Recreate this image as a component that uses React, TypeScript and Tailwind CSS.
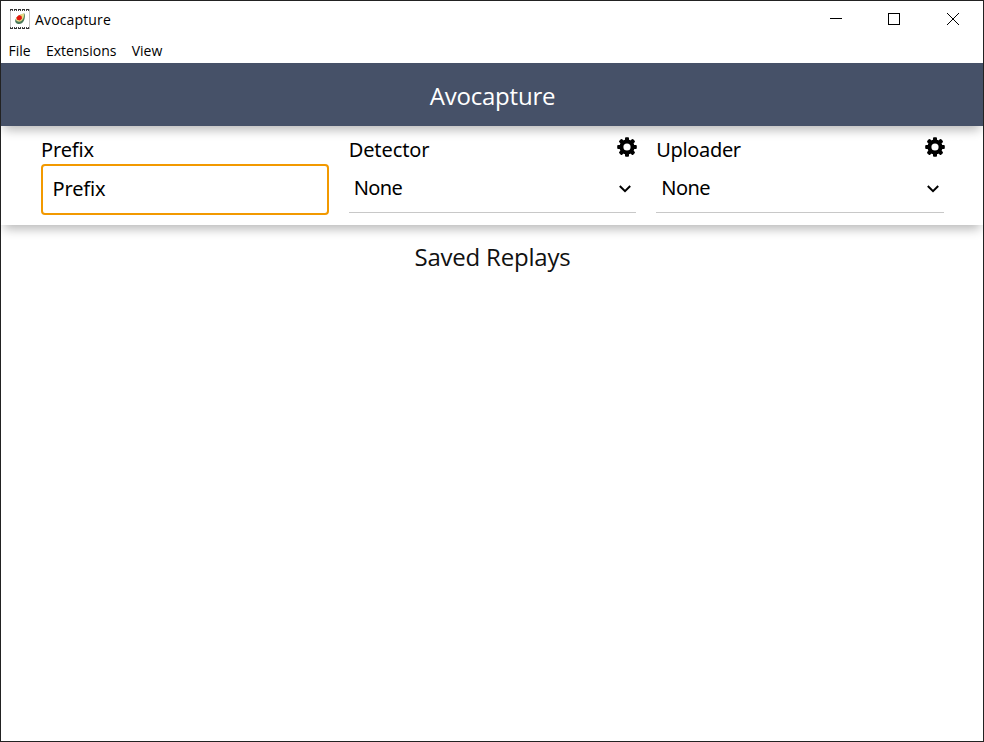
import React from "react";

function AppIcon() {
  return (
    <svg width="20" height="20" viewBox="0 0 20 20" shapeRendering="crispEdges">
      <path d="M0 0h20v20H0z" fill="#fff" />
      <path d="M.5 0v20M19.5 0v20" stroke="#c4c4c4" />
      <path d="M0 .5h20M0 19.5h20" stroke="#333" strokeDasharray="3 1" />
      <path d="M0 1.500h20M0 18.500h20" stroke="#444" strokeDasharray="1 1" />
      <g shapeRendering="auto">
        <path d="M14.500 4.500c1.200 4-.5 10.500-5.500 10.500-3 0-4.500-2.200-3.500-4.500C7 7 11 5 14.500 4.500z" fill="#4b7959" />
        <path d="M14 4.500c.6 3.600-1.500 8.200-5 8.200-2.500 0-3.700-1.700-2.900-3.400C7.400 6.500 11 4.800 14 4.500z" fill="#e5dc86" />
        <path d="M9 6l2.500 1 .5 2.500-2 2-3-.8-.6-2.300z" fill="#e3160f" />
      </g>
    </svg>
  );
}

const TEETH = [0, 45, 90, 135, 180, 225, 270, 315];

function Gear() {
  return (
    <svg width="20" height="20" viewBox="0 0 20 20" className="mt-[11px] -mr-px">
      {TEETH.map((a) => (
        <path key={a} d="M8 5V1.200Q8 .2 9 .2h2q1 0 1 1V5z" transform={`rotate(${a} 10 10)`} />
      ))}
      <circle cx="10" cy="10" r="5.600" fill="none" stroke="#000" strokeWidth="4" />
    </svg>
  );
}

function SelectField({ label, spacing }: { label: string; spacing: string }) {
  return (
    <div className="flex min-w-0 flex-col">
      <div className="flex h-[38px] justify-between">
        <span className={`pt-[10px] text-[20px] leading-[27px] ${spacing}`}>{label}</span>
        <Gear />
      </div>
      <div className="flex h-[49px] items-center justify-between border-b border-[#c8c8c8] pr-[5px] pl-[5px]">
        <span className="pb-0.5 text-[20px] leading-[27px] tracking-[-0.6px]">None</span>
        <svg width="12" height="8" viewBox="0 0 12 8" fill="none" stroke="#000" strokeWidth="2" className="mt-px">
          <path d="M.8 1l5.200 5.200L11.200 1" />
        </svg>
      </div>
    </div>
  );
}

export default function App() {
  return (
    <div className="flex h-[742px] w-[984px] flex-col overflow-hidden border border-[#222] bg-white font-['Noto_Sans',sans-serif] text-black">
      <div className="flex h-9 shrink-0 items-center justify-between pl-[9px]">
        <div className="flex items-center gap-[5px] font-['Open_Sans',sans-serif] text-[14px] tracking-[0.15px]">
          <AppIcon />
          <span>Avocapture</span>
        </div>
        <svg width="154" height="36" viewBox="0 0 154 36" fill="none" stroke="#000">
          <path d="M1 17.500h12M59.500 12.500h11v11h-11z" shapeRendering="crispEdges" />
          <path d="M118 12l12 12M130 12l-12 12" />
        </svg>
      </div>
      <nav className="flex h-[26px] shrink-0 items-center gap-[15.300px] pl-[7.500px] font-['Open_Sans',sans-serif] text-[14px]">
        <span>File</span>
        <span>Extensions</span>
        <span>View</span>
      </nav>
      <header className="z-20 flex h-[63px] shrink-0 items-center justify-center bg-[#465168] pt-0.5 pl-px font-['Open_Sans',sans-serif] text-[24px] tracking-[-0.2px] text-white shadow-[0_7px_10px_-3px_rgba(0,0,0,0.28)]">
        Avocapture
      </header>
      <section className="z-10 grid h-[99px] shrink-0 grid-cols-3 gap-5 bg-white pr-[39px] pl-10 shadow-[0_7px_10px_-3px_rgba(0,0,0,0.28)]">
        <label className="flex min-w-0 flex-col">
          <span className="h-[38px] pt-[10px] text-[20px] leading-[27px] tracking-[-0.15px]">Prefix</span>
          <input
            placeholder="Prefix"
            className="h-[51px] w-full rounded-[4px] border-2 border-[#f29900] bg-white px-[9.500px] pb-0.5 text-[20px] tracking-[-0.15px] outline-none placeholder:text-black placeholder:opacity-100"
          />
        </label>
        <SelectField label="Detector" spacing="tracking-[-0.1px]" />
        <SelectField label="Uploader" spacing="tracking-[-0.35px]" />
      </section>
      <main className="flex flex-1 justify-center pt-[14px] pl-px font-['Open_Sans',sans-serif] text-[24px] tracking-[-0.2px] text-[#111]">
        <h2>Saved Replays</h2>
      </main>
    </div>
  );
}
